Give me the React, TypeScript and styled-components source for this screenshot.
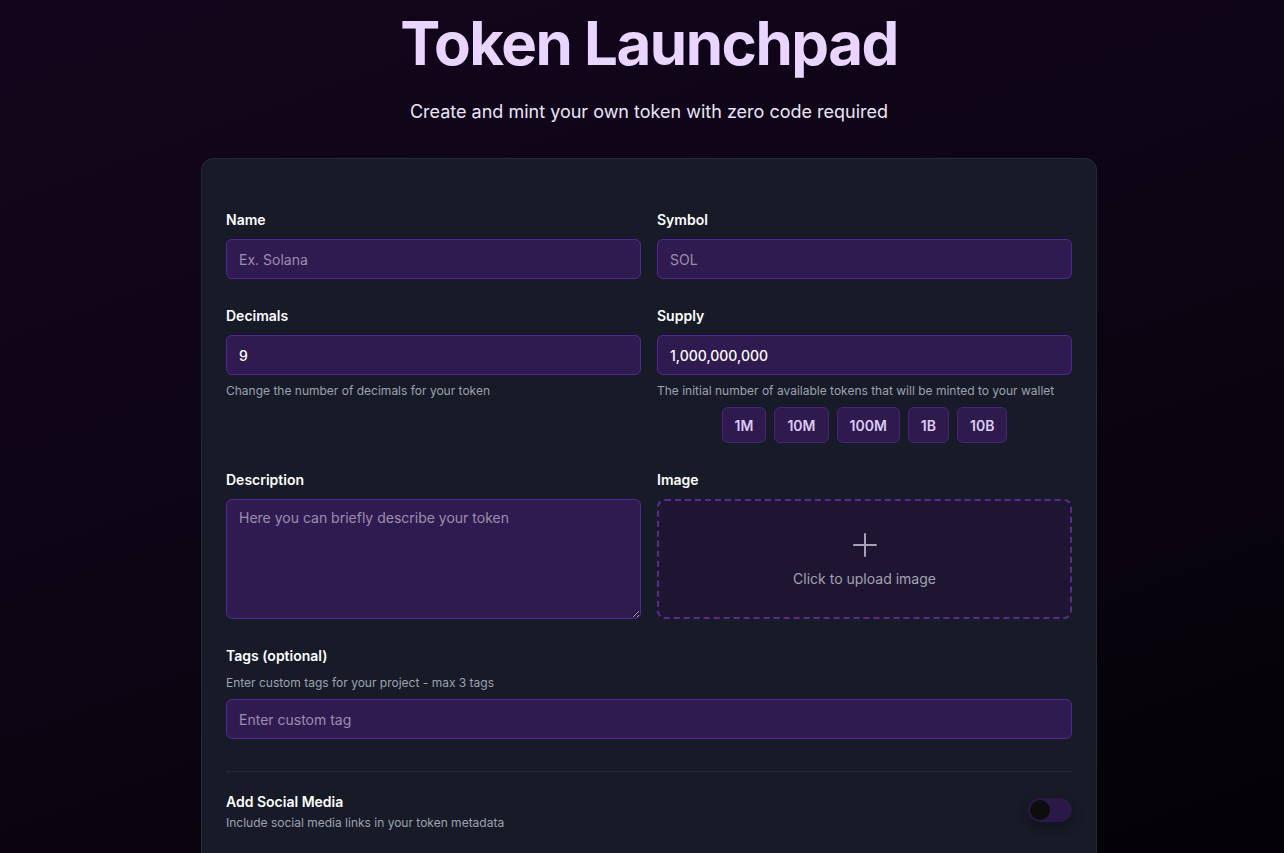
import React, { useState } from "react";
import styled, { createGlobalStyle } from "styled-components";

const GlobalStyle = createGlobalStyle`
  * {
    box-sizing: border-box;
  }

  html,
  body {
    margin: 0;
    padding: 0;
    min-height: 100%;
  }

  body {
    font-family: Inter, "Liberation Sans", sans-serif;
    background: linear-gradient(160deg, #13061c 0%, #0d0515 45%, #040206 100%);
    background-attachment: fixed;
    color: #f4f4f5;
    min-height: 100vh;
  }
`;

const Page = styled.div`
  display: flex;
  flex-direction: column;
  align-items: center;
  padding: 13px 0 40px 14px;
`;

const Title = styled.h1`
  margin: 0;
  font-size: 60px;
  line-height: 60px;
  font-weight: 700;
  letter-spacing: -0.025em;
  color: #e9d5ff;
`;

const Subtitle = styled.p`
  margin: 25px 0 32px;
  font-size: 18px;
  line-height: 28px;
  color: #ece4fb;
`;

const Card = styled.div`
  width: 896px;
  background: #171a27;
  border: 1px solid #262a38;
  border-radius: 12px;
  padding: 51px 24px 40px;
`;

const Grid = styled.div`
  display: grid;
  grid-template-columns: 1fr 1fr;
  column-gap: 16px;
  row-gap: 27px;
`;

const Field = styled.div<{ $full?: boolean }>`
  display: flex;
  flex-direction: column;
  grid-column: ${(p) => (p.$full ? "1 / -1" : "auto")};
`;

const Label = styled.label`
  font-size: 14px;
  line-height: 20px;
  font-weight: 600;
  color: #ffffff;
  margin-bottom: 9px;
`;

const Hint = styled.p<{ $above?: boolean }>`
  margin: ${(p) => (p.$above ? "0 0 8px" : "8px 0 0")};
  font-size: 12px;
  line-height: 16px;
  color: #9ca3af;
`;

const inputBase = `
  width: 100%;
  background: #301b50;
  border: 1px solid #52259a;
  border-radius: 6px;
  color: #ffffff;
  font-family: Inter, "Liberation Sans", sans-serif;
  font-size: 14px;
  font-weight: 500;
  outline: none;

  &::placeholder {
    color: #9a8fae;
    font-weight: 400;
  }
`;

const Input = styled.input`
  ${inputBase}
  height: 40px;
  padding: 0 12px;
`;

const TextArea = styled.textarea`
  ${inputBase}
  height: 120px;
  padding: 8px 12px;
  line-height: 20px;
  resize: vertical;
  display: block;
`;

const Presets = styled.div`
  display: flex;
  justify-content: center;
  gap: 8px;
  margin-top: 8px;
`;

const PresetButton = styled.button`
  height: 36px;
  padding: 0 12px;
  background: #2e1a4d;
  border: 1px solid #47237f;
  border-radius: 6px;
  color: #dccbf7;
  font-family: Inter, "Liberation Sans", sans-serif;
  font-size: 14px;
  font-weight: 600;
  cursor: pointer;
`;

const Upload = styled.div`
  height: 120px;
  border: 2px dashed #5a2b8f;
  border-radius: 8px;
  background: #1d1532;
  display: flex;
  flex-direction: column;
  align-items: center;
  justify-content: center;
  gap: 12px;
  padding-top: 4px;
  cursor: pointer;
`;

const UploadText = styled.span`
  font-size: 14px;
  line-height: 20px;
  color: #a3a3b3;
`;

const Divider = styled.hr`
  border: none;
  border-top: 1px solid #2c2442;
  margin: 32px 0 20px;
`;

const ToggleRow = styled.div`
  display: flex;
  align-items: flex-start;
  justify-content: space-between;
`;

const ToggleText = styled.div`
  display: flex;
  flex-direction: column;
  gap: 3px;
`;

const ToggleTitle = styled.span`
  font-size: 14px;
  line-height: 20px;
  font-weight: 600;
  color: #ffffff;
`;

const ToggleHint = styled.span`
  font-size: 12px;
  line-height: 16px;
  color: #9ca3af;
`;

const Switch = styled.button<{ $on: boolean }>`
  position: relative;
  flex-shrink: 0;
  width: 44px;
  height: 24px;
  margin-top: 6px;
  border: none;
  border-radius: 12px;
  padding: 0;
  background: ${(p) => (p.$on ? "#7c3aed" : "#2a1846")};
  cursor: pointer;
  box-shadow: 0 4px 12px rgba(0, 0, 0, 0.3);

  span {
    position: absolute;
    top: 2px;
    left: ${(p) => (p.$on ? "22px" : "2px")};
    width: 20px;
    height: 20px;
    border-radius: 50%;
    background: #0d0d0f;
  }
`;

const PlusIcon = () => (
  <svg width="24" height="24" viewBox="0 0 24 24" fill="none" stroke="#a3a3b3" strokeWidth="2" strokeLinecap="round">
    <path d="M12 1v22M1 12h22" />
  </svg>
);

const presets = ["1M", "10M", "100M", "1B", "10B"];

export default function App() {
  const [social, setSocial] = useState(false);

  return (
    <>
      <GlobalStyle />
      <Page>
        <Title>Token Launchpad</Title>
        <Subtitle>Create and mint your own token with zero code required</Subtitle>
        <Card>
          <Grid>
            <Field>
              <Label>Name</Label>
              <Input placeholder="Ex. Solana" />
            </Field>
            <Field>
              <Label>Symbol</Label>
              <Input placeholder="SOL" />
            </Field>
            <Field>
              <Label>Decimals</Label>
              <Input defaultValue="9" />
              <Hint>Change the number of decimals for your token</Hint>
            </Field>
            <Field>
              <Label>Supply</Label>
              <Input defaultValue="1,000,000,000" />
              <Hint>The initial number of available tokens that will be minted to your wallet</Hint>
              <Presets>
                {presets.map((p) => (
                  <PresetButton key={p}>{p}</PresetButton>
                ))}
              </Presets>
            </Field>
            <Field>
              <Label>Description</Label>
              <TextArea placeholder="Here you can briefly describe your token" />
            </Field>
            <Field>
              <Label>Image</Label>
              <Upload>
                <PlusIcon />
                <UploadText>Click to upload image</UploadText>
              </Upload>
            </Field>
            <Field $full>
              <Label>Tags (optional)</Label>
              <Hint $above>Enter custom tags for your project - max 3 tags</Hint>
              <Input placeholder="Enter custom tag" />
            </Field>
          </Grid>
          <Divider />
          <ToggleRow>
            <ToggleText>
              <ToggleTitle>Add Social Media</ToggleTitle>
              <ToggleHint>Include social media links in your token metadata</ToggleHint>
            </ToggleText>
            <Switch $on={social} onClick={() => setSocial(!social)}>
              <span />
            </Switch>
          </ToggleRow>
        </Card>
      </Page>
    </>
  );
}
